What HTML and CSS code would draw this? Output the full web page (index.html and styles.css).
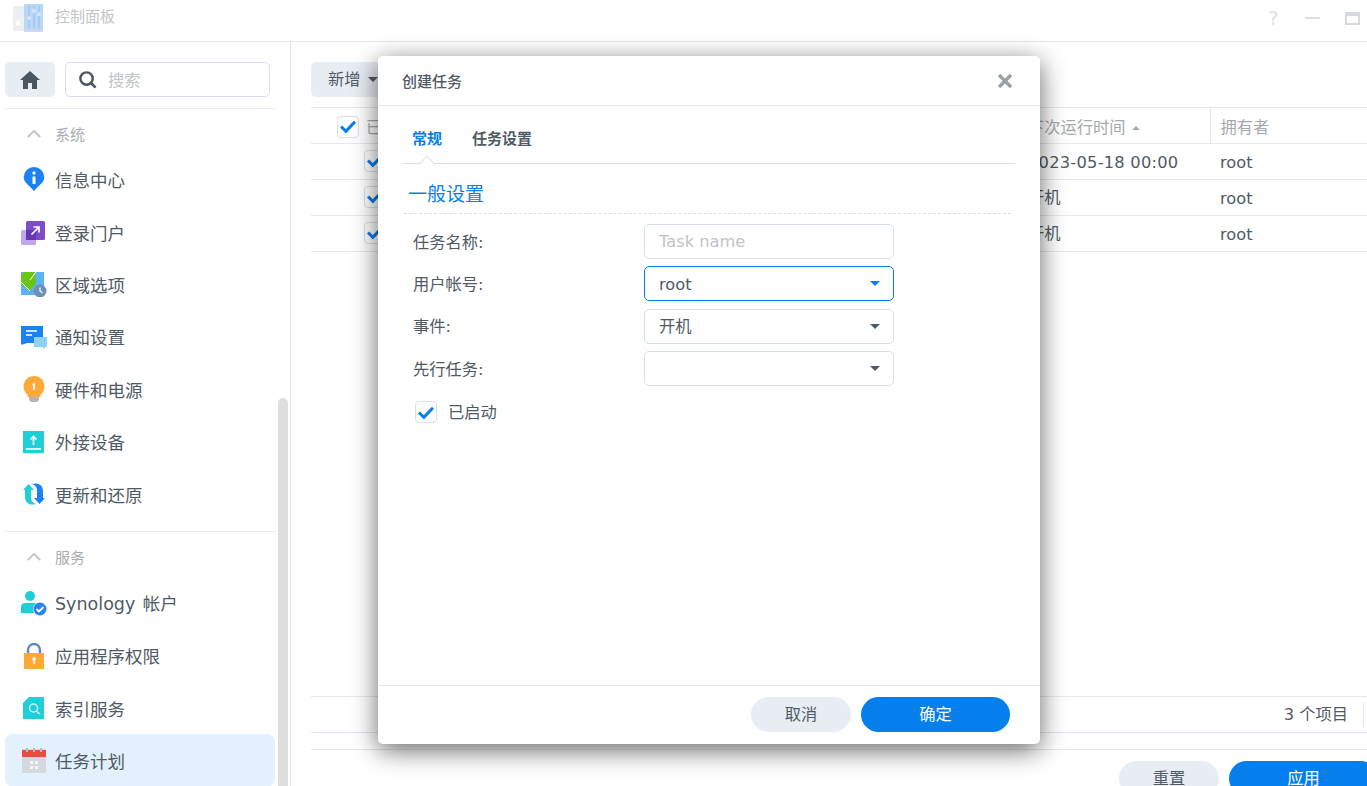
FILE: index.html
```html
<!DOCTYPE html>
<html lang="zh-CN">
  <head>
    <meta charset="UTF-8" />
    <title>控制面板</title>
    <link rel="stylesheet" href="styles.css">
  </head>
  <body>
    <div class="window">
      <header class="titlebar">
        <svg class="app-icon" width="32" height="30" viewBox="0 0 32 30">
          <rect x="1" y="3" width="20" height="25" rx="2" fill="#eceff2" />
          <circle cx="6" cy="20" r="2.500" fill="#fbfcfd" />
          <rect x="12" y="1" width="19" height="26" fill="#b9d8f8" />
          <path d="M17 3v22M22 3v22M27 3v22" stroke="#97bce6" stroke-width="1" />
          <circle cx="17" cy="15" r="2" fill="#d3e6fb" />
          <circle cx="22" cy="8" r="2" fill="#d3e6fb" />
          <circle cx="27" cy="11" r="2" fill="#d3e6fb" />
          <rect x="12" y="27" width="19" height="2" fill="#dcd2f5" />
        </svg>
        <span class="app-title">控制面板</span>
        <div class="window-btns">
          <span class="help">?</span>
          <span class="minimize"></span>
          <span class="maximize"></span>
        </div>
      </header>

      <div class="content">
        <aside class="sidebar">
          <div class="search-row">
            <button class="home-btn">
              <svg width="20" height="18" viewBox="0 0 20 18"><path d="M10 0 0 9h3v9h5v-6h4v6h5V9h3z" fill="#4b5661" /></svg>
            </button>
            <div class="search-box">
              <svg width="19" height="19" viewBox="0 0 20 20"><circle cx="9" cy="9" r="6.500" fill="none" stroke="#4b5661" stroke-width="2.600" /><path d="m14 14 4.500 4.500" stroke="#4b5661" stroke-width="2.800" /></svg>
              <span>搜索</span>
            </div>
          </div>

          <div class="group-title"><svg width="14" height="9" viewBox="0 0 16 10"><path d="m1 9 7-7 7 7" fill="none" stroke="#c3c7cb" stroke-width="2.400" /></svg>系统</div>

          <a class="nav-item">
            <svg width="26" height="26" viewBox="0 0 26 26"><path d="M13 0a10.300 10.300 0 0 1 10.300 10.300c0 5.700-6.300 8.200-10.300 14-4-5.800-10.300-8.300-10.300-14A10.300 10.300 0 0 1 13 0z" fill="#1a82f5" /><circle cx="13" cy="6" r="1.700" fill="#fff" /><path d="M11.500 9.500H14.500V17H11.500z" fill="#fff" /></svg>
            信息中心
          </a>
          <a class="nav-item">
            <svg width="26" height="26" viewBox="0 0 26 26"><rect x="0" y="11" width="15" height="15" rx="1.500" fill="#c0a6ec" /><rect x="5" y="2" width="19" height="19" rx="1.500" fill="#7c4dc4" /><rect x="5" y="11" width="10" height="10" fill="#6339ad" /><path d="M10.500 15.500 17.500 8.500M12.500 8h5.500v5.500" fill="none" stroke="#fff" stroke-width="1.700" /></svg>
            登录门户
          </a>
          <a class="nav-item">
            <svg width="26" height="26" viewBox="0 0 26 26"><rect x="0" y="1" width="23" height="23" fill="#5ab2f7" /><path d="M0 4V13L9 20 15 12 14 1H3z" fill="#6cc414" /><path d="M0 11 9 20M15 1 9 9" stroke="#fff" stroke-width="1" /><circle cx="19" cy="20" r="6.500" fill="#6c90ba" /><path d="M19 16.500V20l2.500 2" fill="none" stroke="#fff" stroke-width="1.200" /></svg>
            区域选项
          </a>
          <a class="nav-item">
            <svg width="26" height="26" viewBox="0 0 26 26"><path d="M0 2h22v17H6l-4 1.500H0z" fill="#1a82f5" /><path d="M5 7h11M5 11h6" stroke="#fff" stroke-width="1.500" /><path d="M13 13h13v10h-2v2l-3-2h-8z" fill="#8fd0f5" /></svg>
            通知设置
          </a>
          <a class="nav-item">
            <svg width="26" height="26" viewBox="0 0 26 26"><path d="M13 0a10.500 10.500 0 0 1 6.500 18.700V21h-13v-2.300A10.500 10.500 0 0 1 13 0z" fill="#fda93a" /><path d="M8 21h10v3l-2 2h-6l-2-2z" fill="#b5b5b5" /><path d="M11.500 9 13 8v6" fill="none" stroke="#fff" stroke-width="1.600" /></svg>
            硬件和电源
          </a>
          <a class="nav-item">
            <svg width="26" height="26" viewBox="0 0 26 26"><rect x="2" y="2" width="21" height="22" fill="#1fcfd8" /><path d="M12.500 16V8M9.500 10.500l3-3 3 3" fill="none" stroke="#fff" stroke-width="1.600" /><path d="M5 20h15" stroke="#fff" stroke-width="1.600" /></svg>
            外接设备
          </a>
          <a class="nav-item">
            <svg width="26" height="26" viewBox="0 0 26 26"><path d="M2 9 7.500 3 13 9H10v8c0 3 2 5 5 6-6 2-11-1-11-7V9z" fill="#1fcfd8" /><path d="M24 17l-5.500 6L13 17h3V9c0-3-2-5-5-6 6-2 11 1 11 7v7z" fill="#1a82f5" /></svg>
            更新和还原
          </a>

          <div class="group-title group-divider"><svg width="14" height="9" viewBox="0 0 16 10"><path d="m1 9 7-7 7 7" fill="none" stroke="#c3c7cb" stroke-width="2.400" /></svg>服务</div>

          <a class="nav-item">
            <svg width="26" height="26" viewBox="0 0 26 26"><circle cx="9" cy="6" r="5" fill="#1fcfd8" /><path d="M0 23v-6c0-3 2-4 4-4h10c1 0 2 1 2 2v8z" fill="#1fcfd8" /><circle cx="19" cy="19" r="7" fill="#fff" /><circle cx="19" cy="19" r="6.500" fill="#2a83ee" /><path d="m15.500 19 2.500 2.500 4.500-4.500" fill="none" stroke="#fff" stroke-width="1.800" /></svg>
            <span class="latin">Synology 帐户</span>
          </a>
          <a class="nav-item">
            <svg width="26" height="26" viewBox="0 0 26 26"><path d="M7 12V7a6 6 0 0 1 12 0v5" fill="none" stroke="#5f88ba" stroke-width="2.400" /><rect x="3" y="10" width="20" height="16" fill="#fda93a" /><circle cx="13" cy="16" r="1.800" fill="#fff" /><path d="M13 16v5" stroke="#fff" stroke-width="1.600" /></svg>
            应用程序权限
          </a>
          <a class="nav-item">
            <svg width="26" height="26" viewBox="0 0 26 26"><path d="M8 2h15v22H2V8z" fill="#1fcfd8" /><circle cx="12.500" cy="13" r="4" fill="none" stroke="#c8f2f5" stroke-width="1.500" /><path d="m15.500 16 3 3" stroke="#c8f2f5" stroke-width="1.600" /></svg>
            索引服务
          </a>
          <a class="nav-item active">
            <svg width="26" height="26" viewBox="0 0 26 26"><rect x="1" y="1" width="24" height="24" fill="#d5d9dd" /><rect x="1" y="2" width="24" height="7" fill="#e2513f" /><path d="M6 0v4M13 0v4M20 0v4" stroke="#b9bdc1" stroke-width="2" /><path d="M9 13h3v3H9zM14 13h3v3h-3zM9 18h3v3H9zM14 18h3v3h-3z" fill="#f5f6f7" /></svg>
            任务计划
          </a>

          <div class="scrollbar"></div>
        </aside>

        <main class="main">
          <div class="toolbar">
            <button class="add-btn">新增<span class="caret"></span></button>
          </div>
          <div class="task-list">
            <table class="task-table">
              <colgroup>
                <col class="col-name" />
                <col class="col-next" />
                <col />
              </colgroup>
              <thead>
                <tr>
                  <th class="head-check"><span class="checkbox"><svg width="18" height="15" viewBox="0 0 16 14"><path d="m1.500 7 4.500 4.500 8.500-9" fill="none" stroke="#057feb" stroke-width="2.800" /></svg></span>已启动</th>
                  <th class="sep">下次运行时间<span class="sort-up"></span></th>
                  <th class="sep">拥有者</th>
                </tr>
              </thead>
              <tbody>
                <tr>
                  <td class="row-check"><span class="checkbox"><svg width="18" height="15" viewBox="0 0 16 14"><path d="m1.500 7 4.500 4.500 8.500-9" fill="none" stroke="#057feb" stroke-width="2.800" /></svg></span></td>
                  <td class="latin-cell date-cell">2023-05-18 00:00</td>
                  <td class="latin-cell">root</td>
                </tr>
                <tr>
                  <td class="row-check"><span class="checkbox"><svg width="18" height="15" viewBox="0 0 16 14"><path d="m1.500 7 4.500 4.500 8.500-9" fill="none" stroke="#057feb" stroke-width="2.800" /></svg></span></td>
                  <td class="cjk-cell">开机</td>
                  <td class="latin-cell">root</td>
                </tr>
                <tr>
                  <td class="row-check"><span class="checkbox"><svg width="18" height="15" viewBox="0 0 16 14"><path d="m1.500 7 4.500 4.500 8.500-9" fill="none" stroke="#057feb" stroke-width="2.800" /></svg></span></td>
                  <td class="cjk-cell">开机</td>
                  <td class="latin-cell">root</td>
                </tr>
              </tbody>
            </table>
          </div>
          <div class="pager"><span>3 个项目</span></div>
          <div class="actions">
            <button class="btn btn-grey">重置</button>
            <button class="btn btn-blue">应用</button>
          </div>
        </main>
      </div>
    </div>

    <div class="dialog">
      <div class="dialog-head">
        <span>创建任务</span>
        <svg width="16" height="16" viewBox="0 0 16 16"><path d="m2 2 12 12M14 2 2 14" stroke="#9a9fa4" stroke-width="3.200" /></svg>
      </div>
      <div class="dialog-body">
        <div class="tabs">
          <span class="tab tab-active">常规</span>
          <span class="tab">任务设置</span>
        </div>
        <div class="section-title">一般设置</div>
        <div class="form-row">
          <label>任务名称:</label>
          <input class="field" type="text" placeholder="Task name" />
        </div>
        <div class="form-row">
          <label>用户帐号:</label>
          <div class="field combo focused"><span class="combo-latin">root</span><span class="caret"></span></div>
        </div>
        <div class="form-row">
          <label>事件:</label>
          <div class="field combo"><span class="combo-cjk">开机</span><span class="caret"></span></div>
        </div>
        <div class="form-row">
          <label>先行任务:</label>
          <div class="field combo"><span class="caret"></span></div>
        </div>
        <div class="enable-row">
          <span class="checkbox"><svg width="18" height="15" viewBox="0 0 16 14"><path d="m1.500 7 4.500 4.500 8.500-9" fill="none" stroke="#057feb" stroke-width="2.800" /></svg></span>
          <span class="enable-label">已启动</span>
        </div>
      </div>
      <div class="dialog-foot">
        <button class="btn btn-grey btn-cancel">取消</button>
        <button class="btn btn-blue">确定</button>
      </div>
    </div>
  </body>
</html>
```

FILE: styles.css
```css
* {
  box-sizing: border-box;
}
html,
body {
  height: 100%;
}
body {
  margin: 0;
  overflow: hidden;
  background: #fff;
  color: #505a64;
  font-family: "DejaVu Sans", "Noto Sans CJK SC", sans-serif;
  font-size: 16.25px;
}
button {
  font-family: inherit;
  border: none;
  cursor: pointer;
}
.window {
  height: 786px;
  display: flex;
  flex-direction: column;
}

/* title bar */
.titlebar {
  height: 42px;
  flex: none;
  display: flex;
  align-items: flex-start;
  padding: 3px 0 0 12px;
  border-bottom: 1px solid #e4e9f0;
}
.app-icon {
  margin-right: 11px;
}
.app-title {
  font-size: 15px;
  line-height: 28px;
  color: #c2c5c8;
}
.window-btns {
  margin-left: auto;
  height: 30px;
  display: flex;
  align-items: center;
  padding-right: 7px;
}
.help {
  width: 13px;
  margin-right: 25px;
  font-size: 19px;
  line-height: 30px;
  color: #dcdfe2;
  text-align: center;
}
.minimize {
  width: 15px;
  height: 2px;
  margin-right: 25px;
  background: #dcdfe2;
}
.maximize {
  width: 15px;
  height: 13px;
  border: 2px solid #d8dbde;
  border-top-width: 4px;
}

.content {
  flex: 1;
  display: flex;
  min-height: 0;
}

/* sidebar */
.sidebar {
  position: relative;
  width: 291px;
  flex: none;
  padding: 20px 15px 0 5px;
  border-right: 1px solid #dfe6f0;
  overflow: hidden;
}
.search-row {
  display: flex;
  gap: 10px;
  padding-bottom: 11px;
  border-bottom: 1px solid #e8ecf2;
}
.home-btn {
  width: 50px;
  height: 35px;
  display: flex;
  align-items: center;
  justify-content: center;
  background: #e8edf4;
  border-radius: 5px;
}
.search-box {
  width: 205px;
  height: 35px;
  display: flex;
  align-items: center;
  gap: 11px;
  padding: 0 0 1px 12px;
  border: 1px solid #d7e0eb;
  border-radius: 5px;
  color: #c0c3c6;
}
.group-title {
  height: 44.5px;
  display: flex;
  align-items: center;
  padding: 5px 0 0 22px;
  gap: 14px;
  font-size: 15px;
  color: #a9adb1;
}
.group-divider {
  height: 46.5px;
  margin-top: 10.5px;
  padding-top: 5px;
  border-top: 1px solid #e8ecf2;
}
.nav-item {
  height: 52.4px;
  display: flex;
  align-items: center;
  padding-left: 16px;
  font-size: 17.5px;
  border-radius: 8px;
}
.nav-item svg {
  flex: none;
  margin-right: 8px;
}
.nav-item.active {
  background: #e3f0fd;
}
.latin {
  padding-bottom: 2px;
  font-size: 17.5px;
  word-spacing: 2px;
}
.scrollbar {
  position: absolute;
  top: 356px;
  right: 2px;
  bottom: 0;
  width: 10px;
  background: #dedede;
  border-radius: 5px 5px 0 0;
}

/* main panel */
.main {
  flex: 1;
  min-width: 0;
  height: 744px;
  display: flex;
  flex-direction: column;
  padding-left: 20px;
  overflow: hidden;
}
.toolbar {
  flex: none;
  height: 65px;
  padding-top: 20px;
}
.add-btn {
  width: 100px;
  height: 35px;
  padding: 0 0 3px 17px;
  display: flex;
  align-items: center;
  gap: 7px;
  background: #e8edf4;
  border-radius: 5px 0 0 5px;
  color: #505a64;
  font-size: 16.25px;
}
.add-btn .caret {
  margin-top: 3px;
}
.caret {
  width: 0;
  height: 0;
  border-left: 5.5px solid transparent;
  border-right: 5.5px solid transparent;
  border-top: 5px solid #505a64;
}
.task-list {
  flex: 1;
  min-height: 0;
}
.task-table {
  width: 100%;
  table-layout: fixed;
  border-collapse: collapse;
}
.col-name {
  width: 704px;
}
.col-next {
  width: 195px;
}
.task-table th,
.task-table td {
  height: 36px;
  padding: 0 0 0 10px;
  border-top: 1px solid #e4e9f0;
  border-bottom: 1px solid #e4e9f0;
  text-align: left;
  font-weight: normal;
  white-space: nowrap;
}
.task-table th {
  color: #a5a9ad;
}
.task-table th.sep {
  padding-left: 13px;
}
.task-table th.sep + th.sep {
  padding-left: 10px;
  border-left: 1px solid #e4e9f0;
}
.task-table .latin-cell {
  padding-top: 2px;
}
.task-table .date-cell {
  padding-left: 13px;
  letter-spacing: 0.25px;
}
.task-table .cjk-cell {
  padding-left: 13px;
  padding-bottom: 3px;
}
.task-table .head-check {
  padding-left: 26px;
}
.task-table .row-check {
  padding: 0 0 2px 53px;
}
.checkbox {
  flex: none;
  display: inline-flex;
  align-items: center;
  justify-content: center;
  width: 22px;
  height: 22px;
  border: 1.5px solid #d7e0eb;
  border-radius: 4px;
  vertical-align: middle;
}
.checkbox svg {
  flex: none;
}
.head-check .checkbox {
  margin: -3px 7px 0 0;
}
.sort-up {
  display: inline-block;
  width: 0;
  height: 0;
  margin-left: 6px;
  vertical-align: middle;
  border-left: 4px solid transparent;
  border-right: 4px solid transparent;
  border-bottom: 4px solid #a5a9ad;
}
.pager {
  flex: none;
  height: 37px;
  display: flex;
  align-items: center;
  justify-content: flex-end;
  padding-right: 3px;
  border-top: 1px solid #e4e9f0;
  border-bottom: 1px solid #dfe6f0;
}
.pager span {
  padding-right: 15px;
  border-right: 1px solid #dfe6f0;
  line-height: 24px;
}
.actions {
  flex: none;
  margin-top: 16px;
  height: 37px;
  padding-top: 11px;
  display: flex;
  align-items: flex-start;
  justify-content: flex-end;
  gap: 10px;
  margin-right: -11px;
  border-top: 1px solid #e4e9f0;
}
.btn {
  flex: none;
  width: 149px;
  height: 35px;
  padding: 0 0 3px;
  border-radius: 18px;
  font-size: 16.25px;
}
.btn-grey {
  width: 100px;
  background: #e8edf4;
  color: #505a64;
}
.btn-blue {
  background: #057feb;
  color: #fff;
}

/* dialog */
.dialog {
  position: absolute;
  top: 56px;
  left: 378px;
  width: 662px;
  height: 688px;
  display: flex;
  flex-direction: column;
  background: #fff;
  border-radius: 5px;
  box-shadow: 0 6px 26px rgba(0, 0, 0, 0.6);
}
.dialog-head {
  flex: none;
  height: 50px;
  display: flex;
  align-items: center;
  justify-content: space-between;
  padding: 0 27px 0 24px;
  border-bottom: 1px solid #e4e9f0;
  font-size: 15px;
  font-weight: 500;
}
.dialog-body {
  flex: 1;
  padding: 0 25px;
}
.tabs {
  height: 58px;
  display: flex;
  align-items: center;
  gap: 30px;
  padding: 6px 0 0 9px;
  border-bottom: 1px solid #d7e0eb;
}
.tab {
  position: relative;
  font-size: 15px;
  font-weight: 700;
}
.tab-active {
  color: #057feb;
}
.tab-active::after {
  content: "";
  position: absolute;
  left: 50%;
  bottom: -22px;
  width: 11px;
  height: 11px;
  margin-left: -6px;
  background: #fff;
  border-left: 1px solid #d7e0eb;
  border-top: 1px solid #d7e0eb;
  transform: rotate(45deg);
}
.section-title {
  height: 50px;
  margin: 0 4px 10px 1px;
  padding: 17px 0 0 4px;
  border-bottom: 1px dashed #d7e0eb;
  color: #057feb;
  font-size: 19px;
  line-height: 26px;
}
.form-row {
  display: flex;
  align-items: center;
  height: 35px;
  margin-bottom: 7.4px;
  padding-left: 10px;
}
.form-row label {
  width: 231px;
  flex: none;
  padding-bottom: 2px;
}
.field {
  width: 250px;
  height: 35px;
  padding: 0 13px 0 14px;
  border: 1px solid #d7e0eb;
  border-radius: 5px;
  background: #fff;
  color: #505a64;
  font-family: inherit;
  font-size: 16.25px;
}
.field::placeholder {
  color: #c0c3c6;
}
.combo {
  display: flex;
  align-items: center;
  justify-content: space-between;
}
.combo-cjk {
  padding-bottom: 3px;
}
.combo-latin {
  padding-top: 2px;
}
.combo .caret {
  margin-left: auto;
}
.focused {
  border-color: #057feb;
}
.focused .caret {
  border-top-color: #057feb;
}
.enable-row {
  display: flex;
  align-items: center;
  gap: 11px;
  margin-top: 13px;
  padding-left: 12px;
}
.enable-label {
  padding-bottom: 2px;
}
.dialog-foot {
  flex: none;
  height: 59px;
  display: flex;
  justify-content: flex-end;
  gap: 10px;
  padding: 11px 30px 0 0;
  border-top: 1px solid #e4e9f0;
}
```
